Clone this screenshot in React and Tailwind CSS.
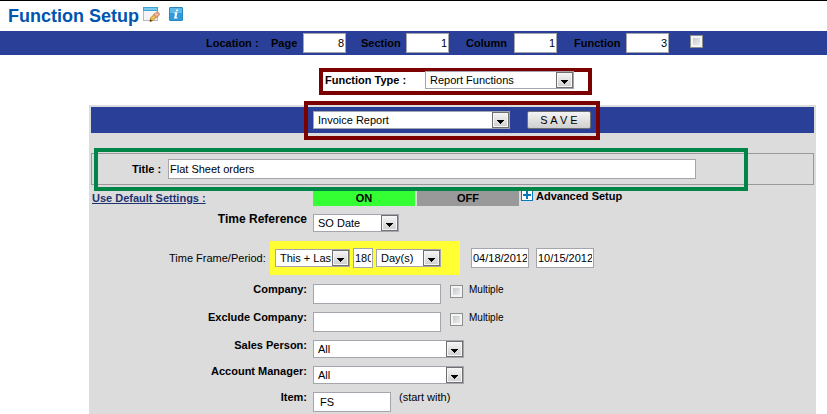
import React from "react";

const field =
  "h-5 shrink-0 border border-[#a5a5ad] bg-white text-[11px] text-black outline-none";
const bold = "font-bold text-black";

function Select({ id, label, value, width, className = "" }) {
  return (
    <div className={`relative h-[18px] shrink-0 ${width} ${className}`}>
      <select
        id={id}
        aria-label={label}
        defaultValue={value}
        className="block h-full w-full appearance-none border border-[#a5a5ad] bg-white pr-[18px] pl-1 text-[11px] leading-4 text-black outline-none"
      >
        <option>{value}</option>
      </select>
      <span className="pointer-events-none absolute top-px right-px flex h-4 w-[17px] items-center justify-center border border-[#707070] bg-gradient-to-b from-[#f6f6f6] to-[#cfcfcf] shadow-[inset_0_0_0_1px_#f6f6f6]">
        <svg width="7" height="4" viewBox="0 0 7 4" className="mt-1" shapeRendering="crispEdges">
          <path d="M0 0h7v1H6v1H5v1H4v1H3V3H2V2H1V1H0z" fill="#000" />
        </svg>
      </span>
    </div>
  );
}

function Check({ id, label, className = "" }) {
  return (
    <input
      id={id}
      type="checkbox"
      aria-label={label}
      className={`block h-[13px] w-[13px] shrink-0 appearance-none border border-[#8e8f8f] bg-gradient-to-br from-[#bcc1c6] to-[#f6f6f6] shadow-[inset_0_0_0_2px_#f4f4f4] ${className}`}
    />
  );
}

function LocationField({ id, label, value, labelWidth }) {
  return (
    <>
      <label htmlFor={id} className={`${bold} ${labelWidth} shrink-0 text-[11px]`}>
        {label}
      </label>
      <input id={id} defaultValue={value} className={`${field} w-[43px] px-px text-right`} />
    </>
  );
}

function Row({ id, label, className = "", labelSize = "text-[11px]", children }) {
  return (
    <div className={`flex items-start ${className}`}>
      <label htmlFor={id} className={`${bold} ${labelSize} w-[216px] shrink-0 text-right`}>
        <span className="block leading-[10px]">{label}</span>
      </label>
      <div className="ml-1.5 flex items-start">{children}</div>
    </div>
  );
}

function EditIcon() {
  return (
    <svg width="17" height="16" viewBox="0 0 17 16" className="shrink-0">
      <rect x="0.5" y="1.5" width="14" height="13" fill="#f4f4f4" stroke="#b9b9b9" />
      <rect x="0" y="1" width="15" height="4" fill="#3fa3d3" />
      <rect x="1" y="2" width="13" height="2" fill="#7cc8ea" />
      <path d="M7.500 12 12 7.500l2.500 2.500-4.500 4.500-3 .9z" fill="#f0c04c" stroke="#a8742c" strokeWidth="0.8" />
      <path d="M11 8.500 13 6.500q1.500-1 2.700.2t.3 2.800L13.500 11.500z" fill="#f3b49c" stroke="#b3705a" strokeWidth="0.8" />
      <path d="M6.700 15.600l.8-2.400 1.700 1.700z" fill="#4a3314" />
    </svg>
  );
}

function InfoIcon() {
  return (
    <svg width="14" height="14" viewBox="0 0 14 14" className="shrink-0">
      <rect x="0.5" y="0.5" width="13" height="13" rx="0.5" fill="#2f9bdc" stroke="#2b86bf" />
      <rect x="1" y="1" width="12" height="5" fill="#5bb8ea" />
      <path d="M7.200 2.500h2l-.4 1.700h-2zM5.500 5.300h3l-1.100 4.900h1v1.200H5l1.100-4.900H5.200z" fill="#fff" />
    </svg>
  );
}

export default function App() {
  return (
    <main className="min-h-screen overflow-hidden border-t border-black bg-white font-['Liberation_Sans',Arial,sans-serif] text-black">
      <header className="flex h-[30px] items-start pl-2">
        <h1 className="text-lg leading-[30px] font-bold text-[#0055b0]">Function Setup</h1>
        <button type="button" aria-label="Edit" className="mt-[5px] ml-1">
          <EditIcon />
        </button>
        <button type="button" aria-label="Information" className="mt-1.5 ml-[9px]">
          <InfoIcon />
        </button>
      </header>

      <section className="flex h-6 items-center bg-[#2a4098] pl-[206px]">
        <span className={`${bold} w-[65px] shrink-0 text-[11px]`}>Location :</span>
        <LocationField id="page" label="Page" value="8" labelWidth="w-8" />
        <LocationField id="section" label="Section" value="1" labelWidth="ml-[15px] w-[45px]" />
        <LocationField id="column" label="Column" value="1" labelWidth="ml-[17px] w-12" />
        <LocationField id="function" label="Function" value="3" labelWidth="ml-[17px] w-[52px]" />
        <Check label="Enable location" className="mb-1 ml-[21px]" />
      </section>

      <div className="mt-[13px] ml-[319px] flex h-[27px] w-[273px] items-start border-4 border-[#7b0000] pl-0.5">
        <label htmlFor="type" className={`${bold} w-[100px] shrink-0 text-[11px]`}>
          <span className="block leading-4">Function Type :</span>
        </label>
        <Select id="type" value="Report Functions" width="w-[149px]" className="-mt-px" />
      </div>

      <section className="relative mt-2.5 mr-[11px] ml-[89px] min-h-[309px] bg-[#dcdcdc] px-0.5 pt-0.5">
        <div className="flex h-[26px] items-center bg-[#2a4098] pl-[222px]">
          <Select label="Report" value="Invoice Report" width="w-[197px]" />
          <button
            type="button"
            className="ml-[17px] h-[18px] w-16 rounded-[2px] border border-[#707070] bg-gradient-to-b from-[#f4f4f4] to-[#cfcfcf] text-[11px] leading-4"
          >
            S A V E
          </button>
        </div>
        <div className="pointer-events-none absolute -top-1 left-[215px] h-[39px] w-[296px] border-4 border-[#7b0000]" />

        <div className="mt-5 flex h-8 items-center border border-[#999999] pl-10">
          <label htmlFor="title" className={`${bold} w-9 shrink-0 text-[11px]`}>
            Title :
          </label>
          <input id="title" defaultValue="Flat Sheet orders" className={`${field} w-[528px] px-px`} />
        </div>
        <div className="pointer-events-none absolute top-[43px] left-[5px] h-[43px] w-[654px] border-4 border-[#008549]" />

        <div className="flex h-[21px] items-start pt-1">
          <div className="mt-0.5 w-[222px] shrink-0 pl-px text-[11px] leading-[14px] font-bold">
            <a href="#defaults" className="text-[#1f3370] underline">
              Use Default Settings :
            </a>
          </div>
          <button type="button" className="h-[17px] w-[102px] bg-[#33ff33] pt-0.5 text-[11px] leading-[15px] font-bold">
            ON
          </button>
          <button type="button" className="ml-0.5 h-[17px] w-[102px] bg-[#999999] pt-0.5 text-[11px] leading-[15px] font-bold">
            OFF
          </button>
          <button type="button" className="ml-0.5 flex items-start text-[11px] leading-[14px] font-bold">
            <svg width="12" height="12" viewBox="0 0 12 12" shapeRendering="crispEdges">
              <path d="M0 0h12v12H0z" fill="#0b79bf" />
              <path d="M1 1h10v10H1z" fill="#fff" />
              <path d="M5 2h2v3h3v2H7v3H5V7H2V5h3z" fill="#0b79bf" />
            </svg>
            <span className="ml-[3px]">Advanced Setup</span>
          </button>
        </div>

        <Row id="timeref" label="Time Reference" labelSize="text-xs" className="mt-2">
          <Select id="timeref" value="SO Date" width="w-[86px]" />
        </Row>

        <div className="mt-[9px] flex h-[34px] items-center">
          <label htmlFor="frame" className="w-[179px] shrink-0 pl-[78px] text-[11px] whitespace-nowrap">
            Time Frame/Period:
          </label>
          <div className="flex h-full w-[190px] items-center bg-[#ffff33] pl-[5px]">
            <Select id="frame" value="This + Last" width="w-[75px]" />
            <input aria-label="Number of periods" defaultValue="180" className={`${field} ml-[3px] w-5 px-px`} />
            <Select label="Period unit" value="Day(s)" width="w-[65px]" className="ml-[3px]" />
          </div>
          <input aria-label="From date" defaultValue="04/18/2012" className={`${field} ml-[11px] w-[58px] px-px`} />
          <input aria-label="To date" defaultValue="10/15/2012" className={`${field} ml-[7px] w-[58px] px-px`} />
        </div>

        <Row id="company" label="Company:" className="mt-[9px]">
          <input id="company" className={`${field} w-32 px-px`} />
          <Check id="multi1" label="Multiple companies" className="mt-px ml-[9px]" />
          <label htmlFor="multi1" className="ml-1.5 text-[10px] leading-3">Multiple</label>
        </Row>
        <Row id="exclude" label="Exclude Company:" className="mt-2">
          <input id="exclude" className={`${field} w-32 px-px`} />
          <Check id="multi2" label="Multiple excluded companies" className="mt-px ml-[9px]" />
          <label htmlFor="multi2" className="ml-1.5 text-[10px] leading-3">Multiple</label>
        </Row>
        <Row id="sales" label="Sales Person:" className="mt-2">
          <Select id="sales" value="All" width="w-[151px]" />
        </Row>
        <Row id="manager" label="Account Manager:" className="mt-2">
          <Select id="manager" value="All" width="w-[151px]" />
        </Row>
        <Row id="item" label="Item:" className="mt-2">
          <input id="item" defaultValue="FS" className={`${field} w-[78px] pl-1.5`} />
          <span className="ml-2 text-[11px] leading-[10px]">(start with)</span>
        </Row>
      </section>
    </main>
  );
}
